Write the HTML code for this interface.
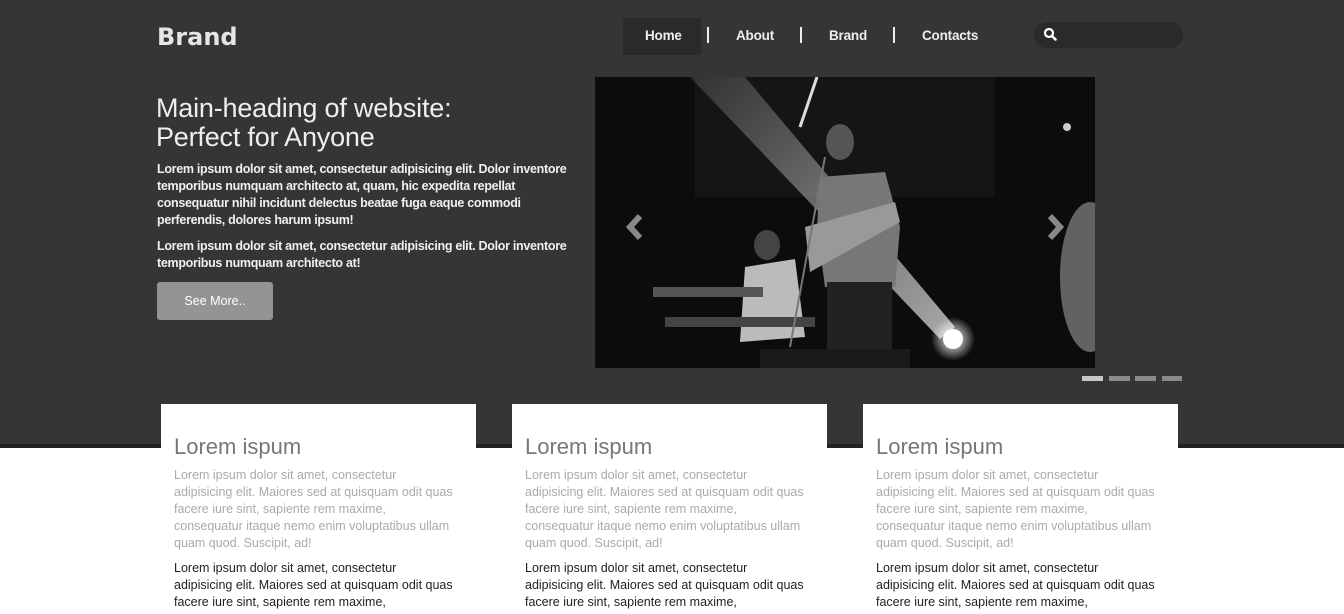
<!DOCTYPE html>
<html><head><meta charset="utf-8"><style>
*{margin:0;padding:0;box-sizing:border-box}
body{width:1344px;height:606px;overflow:hidden;background:#fff;font-family:"Liberation Sans",Arial,sans-serif;position:relative}
.top{position:absolute;left:0;top:0;width:1344px;height:444px;background:#353535}
.band{position:absolute;left:0;top:444px;width:1344px;height:4px;background:#222}
.brand{position:absolute;left:157px;top:23px;font-size:24px;font-weight:bold;color:#e6e6e6;font-family:"DejaVu Sans","Liberation Sans",sans-serif}
.nav a{position:absolute;top:28px;font-size:13.5px;font-weight:bold;color:#eee;text-decoration:none;letter-spacing:-0.2px}
.home{position:absolute;left:623px;top:18px;width:78px;height:37px;background:#2a2a2a;border-radius:2px}
.sep{position:absolute;top:27px;width:2px;height:16px;background:#eee}
.search{position:absolute;left:1034px;top:22px;width:149px;height:26px;background:#2a2a2a;border-radius:13px}
h1{position:absolute;left:156px;top:94px;font-size:27px;font-weight:normal;color:#eee;line-height:29px;letter-spacing:-0.2px}
.p{position:absolute;left:157px;font-size:12.5px;font-weight:bold;color:#f0f0f0;line-height:17px;width:440px;letter-spacing:-0.3px;white-space:nowrap}
.btn{position:absolute;left:157px;top:282px;width:116px;height:38px;background:#949494;border-radius:3px;color:#fff;font-size:12.5px;text-align:center;line-height:38px}
.slide{position:absolute;left:595px;top:77px;width:500px;height:291px;background:#0b0b0b;overflow:hidden}
.dot{position:absolute;top:376px;width:21px;height:5px;background:#8a8a8a}
.card{position:absolute;top:404px;width:315px;height:210px;background:#fff;padding:30px 13px 0 13px}
.card h2{font-size:22px;font-weight:normal;color:#777;line-height:26px;margin-bottom:7px}
.card p{font-size:12.5px;line-height:17px;color:#aaa;margin-bottom:8px;white-space:nowrap}
.card p.d{color:#222}
</style></head><body>
<div class="top"></div><div class="band"></div>
<div class="brand">Brand</div>
<div class="home"></div>
<div class="nav">
<a style="left:645px">Home</a>
<div class="sep" style="left:707px"></div>
<a style="left:736px">About</a>
<div class="sep" style="left:800px"></div>
<a style="left:829px">Brand</a>
<div class="sep" style="left:893px"></div>
<a style="left:922px">Contacts</a>
</div>
<div class="search"><svg width="20" height="20" style="position:absolute;left:8px;top:4px" viewBox="0 0 20 20"><circle cx="7" cy="7" r="4" fill="none" stroke="#fff" stroke-width="2.2"/><line x1="10" y1="10" x2="13.5" y2="13.5" stroke="#fff" stroke-width="2.6" stroke-linecap="round"/></svg></div>
<h1>Main-heading of website:<br>Perfect for Anyone</h1>
<div class="p" style="top:161px">Lorem ipsum dolor sit amet, consectetur adipisicing elit. Dolor inventore<br>temporibus numquam architecto at, quam, hic expedita repellat<br>consequatur nihil incidunt delectus beatae fuga eaque commodi<br>perferendis, dolores harum ipsum!</div>
<div class="p" style="top:238px">Lorem ipsum dolor sit amet, consectetur adipisicing elit. Dolor inventore<br>temporibus numquam architecto at!</div>
<div class="btn">See More..</div>
<div class="slide"><svg width="500" height="291" viewBox="0 0 500 291">
<defs><radialGradient id="g" cx="0.5" cy="0.5" r="0.5"><stop offset="0" stop-color="#fff"/><stop offset="1" stop-color="#fff" stop-opacity="0"/></radialGradient>
<linearGradient id="b" x1="0" y1="0" x2="1" y2="1"><stop offset="0" stop-color="#aaa" stop-opacity="0.2"/><stop offset="0.5" stop-color="#ccc" stop-opacity="0.5"/><stop offset="1" stop-color="#eee" stop-opacity="0.7"/></linearGradient></defs>
<rect width="500" height="291" fill="#0c0c0c"/>
<rect x="100" y="0" width="300" height="120" fill="#151515"/>
<polygon points="95,0 150,0 360,250 345,262" fill="url(#b)"/>
<line x1="222" y1="0" x2="205" y2="50" stroke="#ddd" stroke-width="3"/>
<ellipse cx="245" cy="65" rx="14" ry="18" fill="#555"/>
<path d="M225,100 L290,95 L305,150 L300,210 L230,210 L222,150 Z" fill="#777"/>
<path d="M210,150 L300,125 L305,145 L215,195 Z" fill="#999"/>
<rect x="232" y="205" width="65" height="70" fill="#222"/>
<ellipse cx="172" cy="168" rx="13" ry="15" fill="#444"/>
<path d="M150,190 L200,182 L210,260 L145,265 Z" fill="#bbb"/>
<rect x="58" y="210" width="110" height="10" fill="#555"/>
<rect x="70" y="240" width="150" height="10" fill="#444"/>
<line x1="230" y1="80" x2="195" y2="270" stroke="#777" stroke-width="2"/>
<circle cx="358" cy="262" r="22" fill="url(#g)"/><circle cx="358" cy="262" r="10" fill="#fff"/>
<rect x="165" y="272" width="150" height="19" fill="#1a1a1a"/>
<ellipse cx="495" cy="200" rx="30" ry="75" fill="#888" opacity="0.7"/>
<circle cx="472" cy="50" r="4" fill="#ccc"/>
<path d="M45,139 L35,150 L45,161" fill="none" stroke="#888" stroke-width="6"/>
<path d="M455,139 L465,150 L455,161" fill="none" stroke="#888" stroke-width="6"/>
</svg></div>
<div class="dot" style="left:1082px;background:#c8c8c8"></div>
<div class="dot" style="left:1109px"></div>
<div class="dot" style="left:1135px"></div>
<div class="dot" style="left:1162px;width:20px"></div>
<div class="card" style="left:161px"><h2>Lorem ispum</h2><p>Lorem ipsum dolor sit amet, consectetur<br>adipisicing elit. Maiores sed at quisquam odit quas<br>facere iure sint, sapiente rem maxime,<br>consequatur itaque nemo enim voluptatibus ullam<br>quam quod. Suscipit, ad!</p><p class="d">Lorem ipsum dolor sit amet, consectetur<br>adipisicing elit. Maiores sed at quisquam odit quas<br>facere iure sint, sapiente rem maxime,</p></div>
<div class="card" style="left:512px"><h2>Lorem ispum</h2><p>Lorem ipsum dolor sit amet, consectetur<br>adipisicing elit. Maiores sed at quisquam odit quas<br>facere iure sint, sapiente rem maxime,<br>consequatur itaque nemo enim voluptatibus ullam<br>quam quod. Suscipit, ad!</p><p class="d">Lorem ipsum dolor sit amet, consectetur<br>adipisicing elit. Maiores sed at quisquam odit quas<br>facere iure sint, sapiente rem maxime,</p></div>
<div class="card" style="left:863px"><h2>Lorem ispum</h2><p>Lorem ipsum dolor sit amet, consectetur<br>adipisicing elit. Maiores sed at quisquam odit quas<br>facere iure sint, sapiente rem maxime,<br>consequatur itaque nemo enim voluptatibus ullam<br>quam quod. Suscipit, ad!</p><p class="d">Lorem ipsum dolor sit amet, consectetur<br>adipisicing elit. Maiores sed at quisquam odit quas<br>facere iure sint, sapiente rem maxime,</p></div>
</body></html>
